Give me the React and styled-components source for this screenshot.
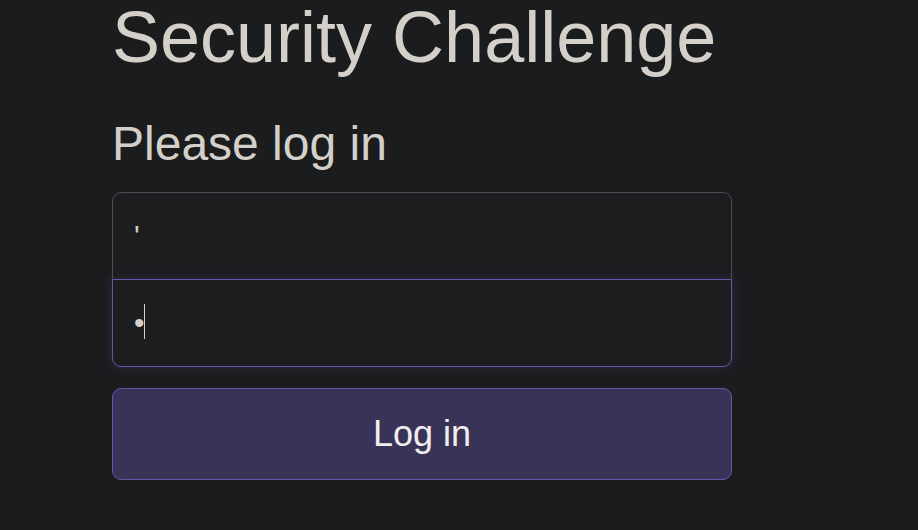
import React from "react";
import styled, { createGlobalStyle } from "styled-components";

const Global = createGlobalStyle`
  html, body {
    margin: 0;
    padding: 0;
    background: #1b1c1e;
    overflow: hidden;
  }
  body {
    font-family: "Liberation Sans", Arial, sans-serif;
    color: #d4d0c9;
  }
`;

const Page = styled.main`
  width: 918px;
  height: 530px;
  background: #1b1c1e;
  padding-left: 112px;
  box-sizing: border-box;
  overflow: hidden;
`;

const Form = styled.form`
  width: 620px;
  display: flex;
  flex-direction: column;
`;

const Title = styled.h1`
  margin: -6px 0 35px;
  font-size: 72px;
  line-height: 1.2;
  font-weight: 400;
  color: #d4d0c9;
  white-space: nowrap;
`;

const Subtitle = styled.h2`
  margin: 0 0 19px;
  font-size: 48px;
  line-height: 1.2;
  font-weight: 400;
  color: #d4d0c9;
`;

const FieldWrap = styled.div`
  position: relative;
  margin-top: ${(p) => (p.$last ? "-1px" : "0")};
  z-index: ${(p) => (p.$last ? 2 : 1)};
`;

const Field = styled.input`
  display: block;
  width: 100%;
  height: 88px;
  box-sizing: border-box;
  margin: 0;
  padding: 0 21px;
  font-family: "Liberation Sans", Arial, sans-serif;
  font-size: 30px;
  color: #d4d0c9;
  caret-color: transparent;
  background: #1c1d1f;
  border: 1px solid #4a4e52;
  border-radius: ${(p) => (p.$last ? "0 0 9px 9px" : "9px 9px 0 0")};
  outline: none;

  &:focus {
    border-color: #6456ab;
    box-shadow: 0 0 9px 2px rgba(95, 82, 163, 0.2);
  }
`;

const Caret = styled.span`
  position: absolute;
  left: 32px;
  top: 25px;
  width: 1px;
  height: 35px;
  background: #d4d0c9;
  pointer-events: none;
`;

const Submit = styled.button`
  margin-top: 21px;
  width: 100%;
  height: 92px;
  box-sizing: border-box;
  background: #3a3358;
  border: 1px solid #6456ab;
  border-radius: 9px;
  color: #f0eeee;
  font-family: "Liberation Sans", Arial, sans-serif;
  font-size: 36px;
  cursor: pointer;
`;

export default function App() {
  return (
    <>
      <Global />
      <Page>
        <Form onSubmit={(e) => e.preventDefault()}>
          <Title>Security Challenge</Title>
          <Subtitle>Please log in</Subtitle>
          <FieldWrap>
            <Field type="text" defaultValue="'" aria-label="Username" />
          </FieldWrap>
          <FieldWrap $last>
            <Field $last type="password" defaultValue="a" aria-label="Password" autoFocus />
            <Caret />
          </FieldWrap>
          <Submit type="submit">Log in</Submit>
        </Form>
      </Page>
    </>
  );
}
